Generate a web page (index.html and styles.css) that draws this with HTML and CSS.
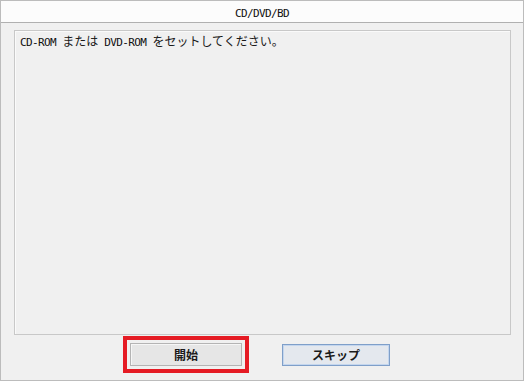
FILE: index.html
```html
<!DOCTYPE html>
<html>
<head lang="ja">
    <meta charset="UTF-8">
    <title>CD/DVD/BD</title>
    <link rel="stylesheet" href="styles.css">
</head>
<body>
<div class="win">
    <div class="title"><span class="en">CD/DVD/BD</span></div>
    <div class="body">
        <div class="msg">
            <span class="en">CD-ROM </span>または<span class="en"> DVD-ROM </span>をセットしてください。
        </div>
        <div class="btns">
            <div class="mark">
                <button class="btn">開始</button>
            </div>
            <button class="btn btn-def">スキップ</button>
        </div>
    </div>
</div>
</body>
</html>
```

FILE: styles.css
```css
html, body, div, span, button {
    margin: 0;
    padding: 0;
}

body {
    width: 524px;
    height: 381px;
    background: #f0f0f0;
    font-family: "Noto Sans CJK JP", sans-serif;
    font-size: 12px;
    color: #1a1a1a;
}

.en {
    font-family: "DejaVu Sans Mono", monospace;
    font-size: 11px;
    letter-spacing: -0.6px;
    white-space: pre;
    color: #111;
}

.win {
    box-sizing: border-box;
    width: 524px;
    height: 381px;
    border: 1px solid #bcbcbc;
    display: flex;
    flex-direction: column;
}

.title {
    height: 21px;
    line-height: 21px;
    text-align: center;
    background: #fcfcfc;
    border-bottom: 1px solid #b0b0b0;
}

.body {
    flex: 1;
    display: flex;
    flex-direction: column;
    padding: 7px 12px 0 13px;
}

.msg {
    box-sizing: border-box;
    height: 305px;
    padding: 3px 5px;
    line-height: 14px;
    border: 1px solid #c8c8c8;
    box-shadow: inset 1px 1px 0 #fafafa;
}

.btns {
    display: flex;
    align-items: center;
    gap: 33px;
    padding: 0 0 0 109px;
    margin-top: 1px;
}

.mark {
    border: 4px solid #e51b24;
    padding: 3px;
}

.btn {
    box-sizing: border-box;
    width: 112px;
    height: 23px;
    font-family: "Noto Sans CJK JP", sans-serif;
    font-size: 12px;
    font-weight: bold;
    color: #1a1a1a;
    background: #e6e6e6;
    border: 1px solid #b4b4b4;
    box-shadow: inset 1px 1px 0 #f6f6f6;
}

.btn-def {
    width: 108px;
    height: 22px;
    background: #e4e8ee;
    border: 1px solid #7f9fc9;
    box-shadow: inset 0 0 0 1px #c4d6ee;
}
```
